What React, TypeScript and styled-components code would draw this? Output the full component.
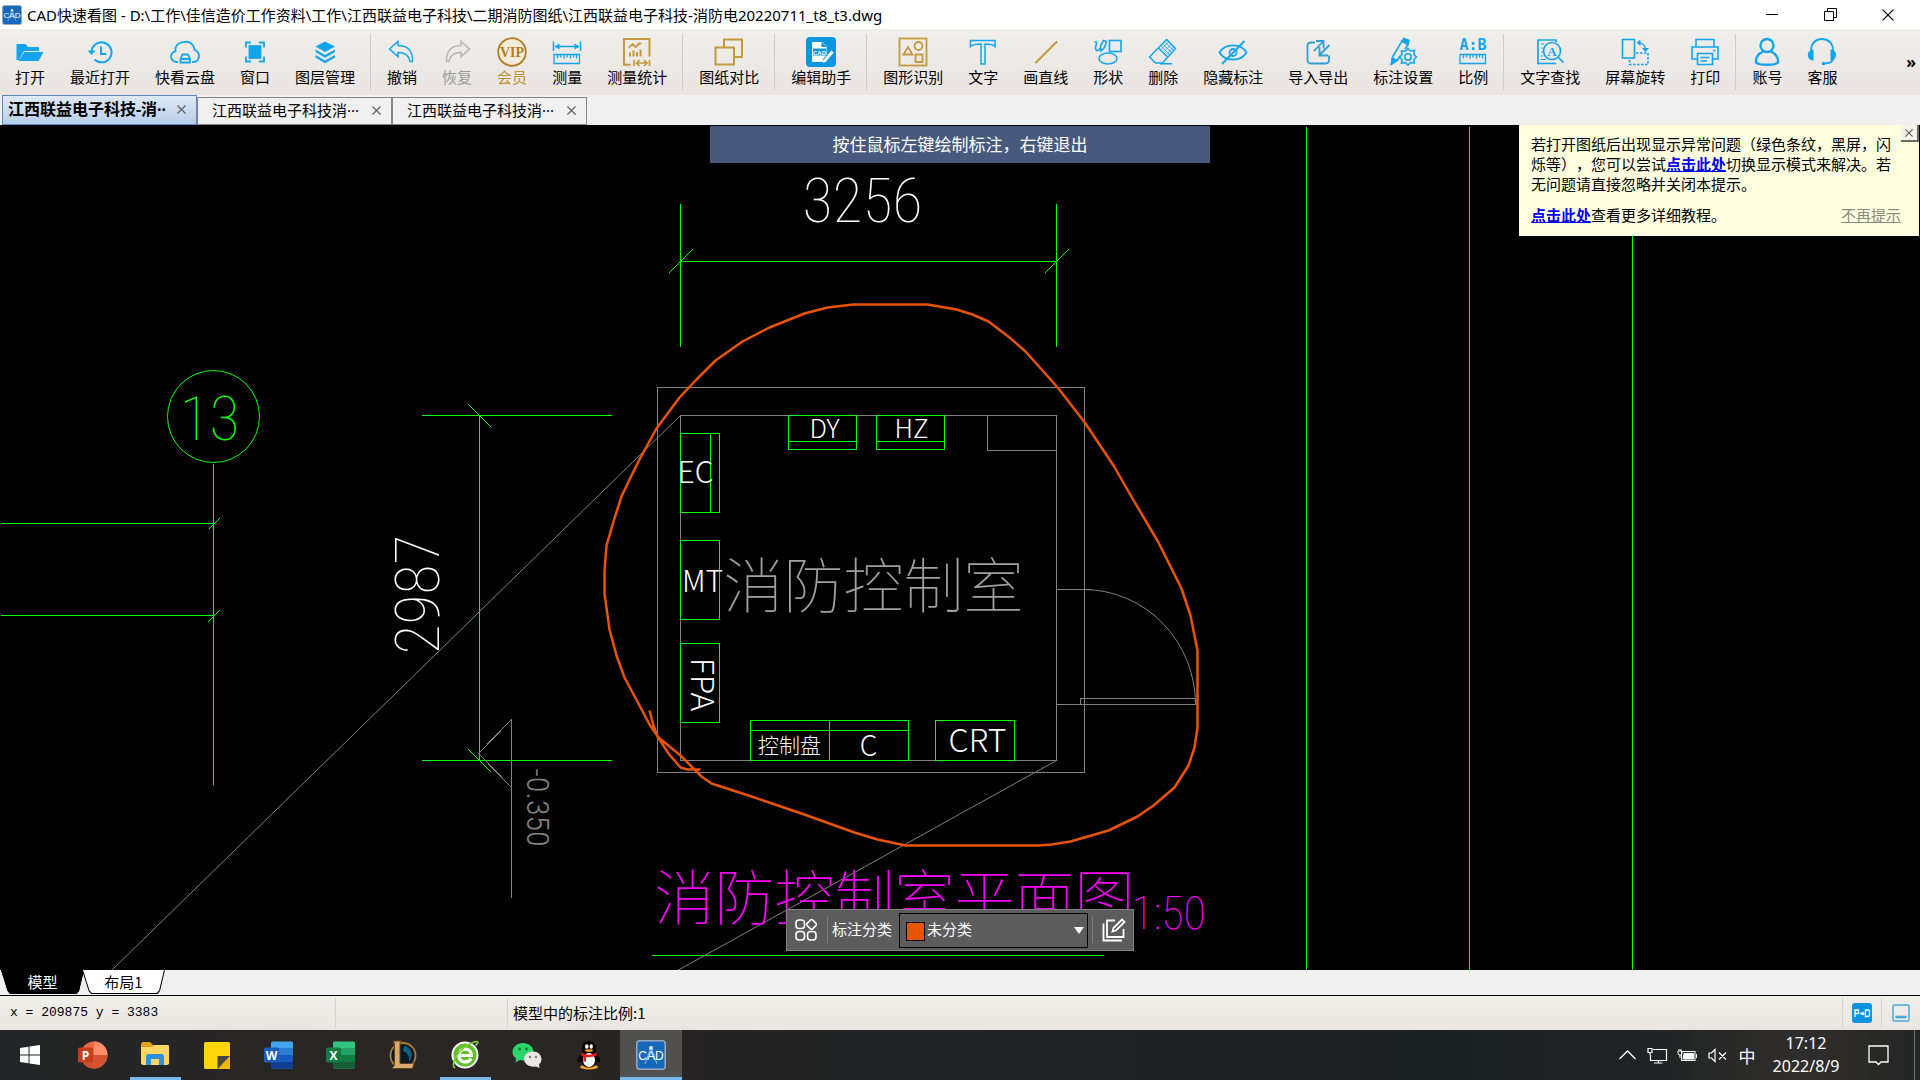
import React from "react";
import styled, { createGlobalStyle, css } from "styled-components";

const UI = `"Noto Sans", "Noto Sans CJK SC", sans-serif`;
const CJK = `"Noto Sans CJK SC", sans-serif`;
const BLUE = "#12a5ee";
const GOLD = "#c39a3c";

const GlobalStyle = createGlobalStyle`
  * { box-sizing: border-box; }
  body { margin: 0; background: #000; font-family: ${CJK}; font-size: 15px; }
  button, select { font: inherit; color: inherit; border: 0; padding: 0; margin: 0; background: none; cursor: pointer; }
`;

const Window = styled.div`
  display: flex;
  flex-direction: column;
  min-height: 100vh;
  overflow: hidden;
`;

/* ---------- title bar ---------- */
const TitleBar = styled.header`
  display: flex;
  align-items: center;
  height: 29px;
  padding: 0 3px 0 2px;
  gap: 5px;
  background: #fff;
`;
const Title = styled.h1`
  flex: 1;
  margin: 0;
  font: 400 15px/28px ${UI};
  color: #000;
  white-space: nowrap;
`;
const WindowButtons = styled.div`
  display: flex;
`;
const WindowButton = styled.button`
  width: 58px;
  height: 28px;
  display: grid;
  place-items: center;
`;

/* ---------- toolbar ---------- */
const Toolbar = styled.nav`
  display: flex;
  height: 66px;
  padding: 0 2px;
  background: linear-gradient(#efefeb, #eae4e1);
`;
const Tool = styled.button<{ $color?: string }>`
  display: flex;
  flex-direction: column;
  align-items: center;
  padding: 8px 12px 0 13px;
  color: ${(p) => p.$color ?? "#000"};
  font-size: 15px;
  line-height: 20px;
  white-space: nowrap;
  svg { display: block; overflow: visible; }
`;
const Divider = styled.i`
  width: 1px;
  height: 56px;
  margin: 5px 3px;
  background: #cfcdcb;
`;
const More = styled.button`
  margin-left: auto;
  padding: 0 2px;
  font: 700 16px/64px ${UI};
`;

/* ---------- document tabs ---------- */
const DocTabs = styled.div`
  display: flex;
  align-items: flex-end;
  height: 30px;
  padding: 0 2px;
  background: #f0f0f0;
`;
const DocTab = styled.div<{ $active?: boolean }>`
  display: flex;
  align-items: center;
  justify-content: space-between;
  width: 195px;
  height: ${(p) => (p.$active ? 30 : 28)}px;
  padding: 0 9px 2px ${(p) => (p.$active ? 5 : 14)}px;
  border: 1px solid ${(p) => (p.$active ? "#5d89bf" : "#868686")};
  background: ${(p) => (p.$active ? "linear-gradient(#dfe9f5, #b9cfe8)" : "#f0f0f0")};
  font-family: ${UI};
  font-size: ${(p) => (p.$active ? 16 : 15)}px;
  font-weight: ${(p) => (p.$active ? 700 : 400)};
  line-height: 22px;
  white-space: nowrap;
`;
const TabClose = styled.button`
  display: grid;
  place-items: center;
  width: 11px;
  height: 20px;
`;

/* ---------- drawing area ---------- */
const Canvas = styled.main`
  position: relative;
  flex: 1;
  min-height: 600px;
  background: #000;
  overflow: hidden;
`;
const Drawing = styled.svg`
  position: absolute;
  inset: 0;
  width: 100%;
  height: 100%;
  fill: none;
  text { stroke: none; font-family: ${CJK}; }
  .narrow text, text.narrow { font-family: "Roboto Condensed", ${CJK}; }
`;
const Hint = styled.p`
  position: absolute;
  top: 1px;
  left: 50%;
  width: 500px;
  height: 37px;
  margin: 0 0 0 -250px;
  background: #475a7d;
  color: #fff;
  font-size: 17px;
  line-height: 35px;
  text-align: center;
`;
const Notice = styled.aside`
  position: absolute;
  top: 0;
  right: 1px;
  width: 400px;
  padding: 9px 18px 11px 12px;
  background: #ffffdf;
  color: #000;
  line-height: 20px;
  text-spacing-trim: space-all;
  p { width: 364px; margin: 0 0 11px; line-break: anywhere; }
  a { color: #0000f0; font-weight: 700; }
`;
const NoticeFoot = styled.div`
  display: flex;
  justify-content: space-between;
  a.mute { color: #8b8b80; font-weight: 400; }
`;
const NoticeClose = styled.button`
  position: absolute;
  top: 0;
  right: 0;
  width: 18px;
  height: 17px;
  display: grid;
  place-items: center;
  background: #f3f3ea;
  border-right: 2px solid #6d6d62;
  border-bottom: 2px solid #6d6d62;
`;
const MarkBar = styled.div`
  position: absolute;
  bottom: 19px;
  left: 50%;
  display: flex;
  align-items: center;
  width: 348px;
  height: 42px;
  margin-left: -174px;
  padding: 0 2px;
  gap: 4px;
  background: #5c5c5c;
  border: 1px solid #808080;
  color: #fff;
  line-height: 20px;
  svg { display: block; }
  label { padding-bottom: 3px; }
`;
const MarkDivider = styled.i`
  width: 1px;
  height: 26px;
  background: #7d7d7d;
`;
const MarkButton = styled.button`
  display: grid;
  place-items: center;
  width: 34px;
  height: 28px;
`;
const SelectBox = styled.div`
  position: relative;
  flex: 1;
  margin-left: 3px;
  select {
    display: block;
    width: 100%;
    height: 35px;
    padding: 0 0 3px 27px;
    border: 1px solid #000;
    appearance: none;
    color: #fff;
    background: #5c5c5c;
  }
  &::before {
    content: "";
    position: absolute;
    left: 7px;
    top: 9px;
    width: 17px;
    height: 17px;
    border: 1px solid #000;
    background: #e85400;
  }
  &::after {
    content: "";
    position: absolute;
    right: 4px;
    top: 14px;
    border: 5px solid transparent;
    border-top: 7px solid #fff;
    border-bottom: 0;
  }
`;

/* ---------- layout tabs + status ---------- */
const LayoutTabs = styled.div`
  display: flex;
  height: 26px;
  padding-left: 1px;
  background: #f0f0f0;
  border-bottom: 1px solid #000;
`;
const LayoutTab = styled.button<{ $active?: boolean }>`
  position: relative;
  width: 83px;
  height: 24px;
  line-height: 24px;
  margin-right: -2px;
  isolation: isolate;
  color: ${(p) => (p.$active ? "#fff" : "#000")};
  &::before, &::after {
    content: "";
    position: absolute;
    inset: 0;
    z-index: -2;
    background: #000;
    clip-path: polygon(0 0, 100% 0, 94% 88%, 91% 100%, 11% 100%, 8% 88%);
  }
  ${(p) => !p.$active && css`
    &::after { inset: 0 1px 1px; z-index: -1; background: #fff; }
  `}
`;
const StatusBar = styled.footer`
  display: flex;
  align-items: center;
  height: 34px;
  background: linear-gradient(#efefea, #eae5e1);
  color: #000;
  white-space: nowrap;
`;
const StatusCell = styled.span<{ $width?: number; $mono?: boolean }>`
  width: ${(p) => (p.$width ? `${p.$width}px` : "auto")};
  flex: ${(p) => (p.$width ? "none" : 1)};
  padding-left: ${(p) => (p.$mono ? 10 : 5)}px;
  line-height: 30px;
  ${(p) => p.$mono && css`font: 13px/34px "Liberation Mono", monospace;`}
`;
const StatusRule = styled.i`
  width: 1px;
  height: 30px;
  background: #d3d3d1;
`;
const StatusButton = styled.button`
  width: 38px;
  height: 30px;
  display: grid;
  place-items: center;
`;

/* ---------- taskbar ---------- */
const Taskbar = styled.nav`
  display: flex;
  height: 50px;
  background: linear-gradient(90deg, #242526, #2a2624 25%, #222324 45%, #1b2022 75%, #1f2323 85%, #302e2c 94%, #232524);
  color: #fff;
`;
const TaskButton = styled.button<{ $state?: "open" | "active" }>`
  display: grid;
  place-items: center;
  width: 62px;
  height: 50px;
  &:first-child { width: 60px; margin-right: 2px; }
  ${(p) => p.$state === "open" && css`
    background: linear-gradient(#76b9ed, #76b9ed) center bottom / 51px 3px no-repeat;
  `}
  ${(p) => p.$state === "active" && css`
    background: #50514f;
    box-shadow: inset 0 -3px #76b9ed;
  `}
`;
const Tray = styled.div`
  display: flex;
  align-items: center;
  margin-left: auto;
  padding-right: 5px;
`;
const TrayButton = styled.button<{ $width: number }>`
  width: ${(p) => p.$width}px;
  height: 50px;
  display: grid;
  place-items: center;
  font-size: 17px;
`;
const Clock = styled.time`
  width: 88px;
  font: 400 16px/23px ${UI};
  text-align: center;
`;
const ShowDesktop = styled.i`
  height: 50px;
  width: 1px;
  margin-left: 7px;
  background: #757574;
`;

/* ---------- icons ---------- */
type IconProps = { color?: string; width?: number; children: React.ReactNode };
const Icon = ({ color = BLUE, width = 2, children }: IconProps) => (
  <svg width="30" height="30" viewBox="0 0 30 30" fill="none" stroke={color} strokeWidth={width} aria-hidden="true">
    {children}
  </svg>
);

const Ruler = ({ y }: { y: number }) => (
  <g strokeWidth="1.300">
    <path d={`M2 ${y}H27.500V${y + 9}H2Z`} />
    <path d={`M5.500 ${y}v4M8.500 ${y}v3M12 ${y}v4M15 ${y}v3M18.500 ${y}v4M21.500 ${y}v3M24.500 ${y}v4`} />
  </g>
);

const icons: Record<string, React.ReactNode> = {
  open: (
    <Icon width={0}>
      <path fill={BLUE} d="M1.500 23V7h9l2.500 3h11v4H9L4 23ZM9.500 15H28.500L23.500 24H3.500Z" />
    </Icon>
  ),
  recent: (
    <Icon>
      <path d="M6.500 15A10 10 0 1 1 9.500 22.500" />
      <path d="M16 9.500V17H21.500" />
      <path d="M2.500 13.500H10.500L6.500 18Z" fill={BLUE} stroke="none" />
    </Icon>
  ),
  cloud: (
    <Icon width={1.800}>
      <path d="M8 25H6.500C3 25 1 22 1 19.500 1 16.500 3.500 14.500 5.500 14.300 4.500 8.500 9.500 4.800 14 5.200 19 3.500 24 7 24.500 13 27.500 14 29 16 29 19 29 22.500 26.500 25 23.500 25H22" />
      <path d="M12.500 17.500H18L20 22V25.500H10.500V22ZM10.500 22H20" />
    </Icon>
  ),
  window: (
    <Icon width={1.800}>
      <path d="M6 10.500V5.500H11M19 5.500H24V10.500M24 19.500V24.500H19M11 24.500H6V19.500" />
      <rect x="9.500" y="9" width="11" height="12" fill={BLUE} />
    </Icon>
  ),
  layers: (
    <Icon width={0}>
      <path fill={BLUE} d="M15 4.500L25 9.500 15 15 5.500 9.500ZM5.500 12.500L15 18 25 12.500V15L15 20.800 5.500 15ZM5.500 18L15 23.500 25 18V20.500L15 26.300 5.500 20.500Z" />
    </Icon>
  ),
  undo: (
    <Icon width={1.500}>
      <path d="M2.500 12L11 4.500V8.500C20 8.500 26 13 25.500 24.500H23C22 18 18 15.500 11 15.500V19.500Z" />
    </Icon>
  ),
  redo: (
    <Icon width={1.500} color="#b5b5b5">
      <path d="M27.500 12L19 4.500V8.500C10 8.500 4 13 4.500 24.500H7C8 18 12 15.500 19 15.500V19.500Z" />
    </Icon>
  ),
  vip: (
    <Icon color="#b37d20" width={1.800}>
      <circle cx="15" cy="15" r="13.800" fill="#f4ecd9" />
      <text x="15" y="19.500" textAnchor="middle" fontFamily="Liberation Serif, serif" fontWeight="700" fontSize="14" fill="#b07c1c" stroke="none">VIP</text>
    </Icon>
  ),
  measure: (
    <Icon width={1.500}>
      <path d="M1.500 4.500V14M28.500 4.500V14M3.500 9.500H26.500" />
      <path d="M2.500 9.500L7.500 6.500V12.500ZM27.500 9.500L22.500 6.500V12.500Z" fill={BLUE} stroke="none" />
      <Ruler y={17.500} />
    </Icon>
  ),
  stats: (
    <Icon color={GOLD} width={2}>
      <path d="M8.500 27.800H2V2H27.500V19.500" />
      <path strokeWidth="1.700" d="M6.500 11L10.500 7 13.500 10 18.500 6M15.500 6.500H19.500" />
      <path d="M8 15.500V19.500M11.500 13.500V19.500M15 15V19.500M18.500 12.500V19.500" />
      <path strokeWidth="1.700" d="M12 23V29M27.500 23V29M14 26H25.500M17.500 23L14.500 26 17.500 29M22 23L25 26 22 29" />
    </Icon>
  ),
  compare: (
    <Icon color={GOLD} width={2}>
      <path d="M10 10V2.500H28V20H20.500" />
      <rect x="1.500" y="10.500" width="18.500" height="17" />
    </Icon>
  ),
  helper: (
    <Icon width={0}>
      <rect width="30" height="30" rx="4" fill="#0b96e2" />
      <path fill="#fff" d="M6 5H16L20.500 9.500V25H6Z" />
      <path fill="#0b96e2" d="M15.500 5V10H20.500Z" />
      <rect x="7" y="11.500" width="13" height="7" fill="#0b96e2" />
      <text x="13.500" y="17.500" textAnchor="middle" fontFamily="Liberation Sans, sans-serif" fontWeight="700" fontSize="6" fill="#fff" stroke="none">CAD</text>
      <path stroke="#0b96e2" strokeWidth="5" d="M26.500 14.500L18.500 24" />
      <path stroke="#fff" strokeWidth="3" d="M26.500 14.500L19 23.500" />
      <path d="M17 26l.5-3.500 3 2Z" fill="#fff" />
    </Icon>
  ),
  shapesFind: (
    <Icon color={GOLD} width={1.800}>
      <rect x="1.500" y="1.500" width="27" height="27" />
      <circle cx="20.500" cy="9" r="4" />
      <path d="M10 10L14.500 17.500H5.500ZM17.500 17.500H24.500V25H17.500Z" />
    </Icon>
  ),
  text: (
    <Icon width={1.500}>
      <path d="M2.500 3.500H27V9.500C25 7 20 7 17 7V27H13V7C10 7 5 7 2.500 9.500Z" />
    </Icon>
  ),
  line: (
    <Icon color={GOLD} width={2.200}>
      <path d="M4.500 26L26 4.500" />
    </Icon>
  ),
  shapes: (
    <Icon width={1.600}>
      <rect x="16.500" y="3.500" width="11.500" height="11" />
      <ellipse cx="15" cy="21.500" rx="9" ry="5.500" />
      <path d="M1.500 5C5 4 3 8 2.500 10.500 2.500 14 5 15 7 11.500M8 14L7.500 9 10.500 3.500 13.500 4.500 11.500 10.500Z" />
    </Icon>
  ),
  erase: (
    <Icon width={1.500}>
      <path d="M18.500 2.500L27.500 11.500 14.500 26H7.500L1.500 20Z" />
      <path d="M10.500 11L19.500 20M12 26.800H24" />
      <path strokeWidth="0.800" d="M13 9L22 18M15 7L24 16M17 5L26 14M13 12.500L21 4.500M15.500 15L24 7M18 17.500L26 9.500" />
    </Icon>
  ),
  hide: (
    <Icon width={1.800}>
      <path d="M1.500 15.500C7 6 23 6 28.500 15.500 23 25 7 25 1.500 15.500Z" />
      <circle cx="15" cy="15.500" r="3.500" />
      <path d="M26.500 4L4 27" />
    </Icon>
  ),
  transfer: (
    <Icon width={1.800} color="#2f9fd6">
      <path d="M12 5.500H8Q4.500 5.500 4.500 9V23Q4.500 26.500 8 26.500H22.500Q26 26.500 26 23V18.500" />
      <path d="M11 14L20 4.500M13 4H20.500V11.500M26.500 8L17 17.500M16.500 10V18.500H25" />
    </Icon>
  ),
  markSet: (
    <Icon width={1.600}>
      <path d="M4.500 20L14 4 20 7.500 17 12M4.500 20L3.500 27 9.500 23L12 19" />
      <path d="M14 4L16 1.500 21 3.500 20 7.500ZM4.500 21L3.500 27 9 23.500Z" fill={BLUE} />
      <path d="M20 11.500L22.500 14 26.500 13.500 26 17.500 28.500 20 26 22.500 26 26 22.500 25.500 20 28 17.500 25.500 13.500 26 14 22.500 11.500 20 14 17.500 13.500 14 17.500 14Z" />
      <circle cx="20" cy="20" r="3.200" />
    </Icon>
  ),
  ratio: (
    <Icon>
      <text x="15" y="13" textAnchor="middle" fontFamily="DejaVu Sans Mono, monospace" fontWeight="700" fontSize="15" fill={BLUE} stroke="none">A:B</text>
      <Ruler y={17.500} />
    </Icon>
  ),
  find: (
    <Icon width={1.700}>
      <path d="M21 26.500H3V3H21V5" />
      <path strokeWidth="1.200" d="M6 7H9M6 11H7.500M6 15H7.500M6 19H8M6 22.500H11" />
      <circle cx="17" cy="14" r="8.500" />
      <path d="M23 20L28.500 25.500" />
      <text x="17" y="18.500" textAnchor="middle" fontFamily="Liberation Serif, serif" fontWeight="700" fontSize="13" fill={BLUE} stroke="none">A</text>
    </Icon>
  ),
  rotate: (
    <Icon width={1.600}>
      <rect x="2.500" y="2.500" width="12" height="18.500" />
      <path strokeDasharray="2.500 1.500" d="M16 16H28V27.500H9.500V22" />
      <path d="M19 6C22 6 25 8 25.500 12" />
      <path d="M20.500 2.500V9L16.500 5.500ZM22 11H29L25.500 15Z" fill={BLUE} stroke="none" />
    </Icon>
  ),
  print: (
    <Icon width={1.600}>
      <path d="M6 9.500V2.500H24V9.500M7 22H2V10H28V22H23" />
      <path d="M7.500 16.500H22.500V27.500H7.500ZM10.500 20.500H19.500M10.500 24H17M23 13.500H25.500" />
    </Icon>
  ),
  account: (
    <Icon width={2.400}>
      <circle cx="15" cy="8.500" r="6.500" />
      <path d="M11 14.500C6 17 3.500 21 4 25.500C7 28.500 23 28.500 26 25.500 26.500 21 24 17 19 14.500" />
    </Icon>
  ),
  service: (
    <Icon width={1.800}>
      <path d="M4 14C3 -2 27 -2 26 14M26 22C25 25.500 21 26.500 18 26.500" />
      <path d="M6.500 12.500V23.500C-1 23.500 -1 12.500 6.500 12.500ZM23.500 12.500V23.500C31 23.500 31 12.500 23.500 12.500Z" fill={BLUE} stroke="none" />
      <circle cx="16.500" cy="26.500" r="1.800" fill={BLUE} stroke="none" />
    </Icon>
  ),
};

const toolGroups: [string, string, string?][][] = [
  [["open", "打开"], ["recent", "最近打开"], ["cloud", "快看云盘"], ["window", "窗口"], ["layers", "图层管理"]],
  [["undo", "撤销"], ["redo", "恢复", "#9b9b9b"], ["vip", "会员", "#c0912f"], ["measure", "测量"], ["stats", "测量统计"]],
  [["compare", "图纸对比"]],
  [["helper", "编辑助手"]],
  [["shapesFind", "图形识别"], ["text", "文字"], ["line", "画直线"], ["shapes", "形状"], ["erase", "删除"], ["hide", "隐藏标注"], ["transfer", "导入导出"], ["markSet", "标注设置"], ["ratio", "比例"]],
  [["find", "文字查找"], ["rotate", "屏幕旋转"], ["print", "打印"]],
  [["account", "账号"], ["service", "客服"]],
];

const Cross = ({ size, color, width = 1.500 }: { size: number; color: string; width?: number }) => (
  <svg width={size} height={size} viewBox="0 0 10 10" aria-hidden="true">
    <path d="M0.500 0.500L9.500 9.500M9.500 0.500L0.500 9.500" stroke={color} strokeWidth={width} />
  </svg>
);

const CadLogo = ({ size }: { size: number }) => (
  <svg width={size} height={size} viewBox="0 0 30 30" aria-hidden="true">
    <rect x="0.750" y="0.750" width="28.500" height="28.500" rx="3" fill="#1668bd" stroke="#9aa9b8" strokeWidth="1.500" />
    <path d="M15 7L9 24M15 7L21 24" stroke="#7db9ef" strokeWidth="1" />
    <circle cx="15" cy="8" r="2" fill="#d8ecff" />
    <text x="15" y="20" textAnchor="middle" fontFamily="Liberation Sans, sans-serif" fontSize="12" fill="#fff">CAD</text>
  </svg>
);

const Office = ({ letter, colors, round }: { letter: string; colors: string[]; round?: boolean }) => (
  <svg width="30" height="30" viewBox="0 0 30 30" aria-hidden="true">
    {round ? (
      <>
        <circle cx="16" cy="15" r="13.500" fill={colors[0]} />
        <path d="M16 1.500A13.500 13.500 0 0 1 29.500 15H16Z" fill={colors[1]} />
        <path d="M2.500 15H29.500A13.500 13.500 0 0 1 2.500 15Z" fill={colors[2]} />
      </>
    ) : (
      <>
        <rect x="7" y="1.500" width="22" height="27" rx="1.500" fill={colors[0]} />
        <path d="M7 8H29V15H7Z" fill={colors[1]} />
        <path d="M7 15H29V22H7Z" fill={colors[2]} />
        <path d="M7 22H29V28.500H7Z" fill={colors[4]} />
      </>
    )}
    <rect x="0" y="7.500" width="15" height="15" rx="1.500" fill={colors[3]} />
    <text x="7.500" y="19.500" textAnchor="middle" fontFamily="Open Sans, sans-serif" fontWeight="700" fontSize="12" fill="#fff">{letter}</text>
  </svg>
);

/* ---------- CAD plan ---------- */
const sketch =
  "M649 710L653 725 657 736 668 753 680 767 687 769 700 769" +
  "M695 770L680 755 658 737 649 724 639 705 624 677 616 655 609 629 604 593 604 571 606 545 613 521 621 496 630 477 639 459 656 428 679 397 696 379 715 360 742 341 769 327 804 313 827 307 853 304 927 304 956 309 972 314 988 321 1009 337 1025 351 1042 370 1058 388 1085 423 1113 465 1132 498 1158 542 1181 588 1190 615 1197 650 1197 727 1194 747 1188 765 1174 787 1153 805 1137 816 1108 830 1070 841 1051 844 1038 845 905 845 877 839 854 832 801 813 745 794 711 783 701 776 695 770";

const Plan = () => (
  <Drawing viewBox="-0.5 124.5 1920 845" preserveAspectRatio="xMidYMid slice" role="img" aria-label="消防控制室平面图">
    <g stroke="#00ff00" shapeRendering="crispEdges">
      <path d="M1306 126V970M1469 126V970M1632 126V970" />
      <path d="M213 463V784M0 523H213M0 615H213M208 529L219 518M207 622L219 610" />
      <path d="M479 415V760M421 415H611M421 760H611M468 404L491 427M468 749L491 772" />
      <path d="M680 203V346M1056 203V346M680 261H1056M668 273L692 249M1044 273L1068 249M651 955H1103" />
    </g>
    <circle cx="213" cy="416" r="46" stroke="#00ff00" />
    <g stroke="#808080" shapeRendering="crispEdges">
      <path d="M657 387H1084V772H657ZM680 415H1056V760H680ZM987 415V450H1056" />
      <path d="M1056 589H1090M1056 704H1195V698H1080V704" />
      <path d="M511 719V897M511 719L478 753 511 787" />
    </g>
    <path d="M1084 589A112 115 0 0 1 1195 704M680 415L111 970M1056 760L677 970" stroke="#808080" />
    <g stroke="#00ff00" shapeRendering="crispEdges">
      <path d="M788 415H856V449H788ZM788 441H856M876 415H944V449H876ZM876 441H944" />
      <path d="M680 433H719V512H680ZM710 433V512M680 540H719V619H680ZM680 643H719V722H680Z" />
      <path d="M750 720H908V760H750ZM750 730H908M829 720V760M935 720H1014V760H935Z" />
    </g>
    <g fill="#fff" fontWeight="300" fontSize="26">
      <text x="824" y="437" textAnchor="middle">DY</text>
      <text x="911" y="437" textAnchor="middle">HZ</text>
      <text x="695" y="482" textAnchor="middle" fontSize="30">EC</text>
      <text x="702" y="591" textAnchor="middle" fontSize="30">MT</text>
      <text transform="translate(690 684) rotate(90)" textAnchor="middle" fontSize="32">FPA</text>
      <text x="789" y="752" textAnchor="middle" fontSize="21">控制盘</text>
      <text x="868" y="755" textAnchor="middle" fontSize="28">C</text>
      <text x="977" y="751" textAnchor="middle" fontSize="32">CRT</text>
    </g>
    <g className="narrow" fill="#fff" fontSize="62" fontWeight="100">
      <text x="862" y="221" textAnchor="middle">3256</text>
      <text transform="translate(438 594) rotate(-90)" textAnchor="middle">2987</text>
    </g>
    <text className="narrow" x="209" y="439" textAnchor="middle" fill="#00ff00" fontSize="62" fontWeight="100">13</text>
    <text className="narrow" transform="translate(526 807) rotate(90)" textAnchor="middle" fill="#858585" fontSize="32" fontWeight="300">-0.350</text>
    <text x="723" y="607" fill="#a0a0a0" fontSize="60" fontWeight="100">消防控制室</text>
    <g fill="#ff00ff" fontWeight="100">
      <text x="654" y="919" fontSize="60">消防控制室平面图</text>
      <text className="narrow" x="1168" y="928" fontSize="46" textAnchor="middle">1:50</text>
    </g>
    <path d={sketch} stroke="#e85400" strokeWidth="2.500" strokeLinejoin="round" />
  </Drawing>
);

const docTabs = ["江西联益电子科技-消··", "江西联益电子科技消···", "江西联益电子科技消···"];

export default function App() {
  return (
    <Window>
      <GlobalStyle />
      <TitleBar>
        <CadLogo size={20} />
        <Title>CAD快速看图 - D:\工作\佳信造价工作资料\工作\江西联益电子科技\二期消防图纸\江西联益电子科技-消防电20220711_t8_t3.dwg</Title>
        <WindowButtons>
          <WindowButton aria-label="最小化">
            <svg width="12" height="12"><path d="M0 5.500H12" stroke="#000" /></svg>
          </WindowButton>
          <WindowButton aria-label="还原">
            <svg width="13" height="13" fill="none" stroke="#000"><path d="M0.500 3.500H9.500V12.500H0.500ZM3.500 3V0.500H12.500V9.500H10" /></svg>
          </WindowButton>
          <WindowButton aria-label="关闭">
            <Cross size={12} color="#000" width={1} />
          </WindowButton>
        </WindowButtons>
      </TitleBar>

      <Toolbar>
        {toolGroups.map((group, i) => (
          <React.Fragment key={i}>
            {i > 0 && <Divider />}
            {group.map(([icon, label, color]) => (
              <Tool key={icon} $color={color}>
                {icons[icon]}
                {label}
              </Tool>
            ))}
          </React.Fragment>
        ))}
        <More aria-label="更多">»</More>
      </Toolbar>

      <DocTabs>
        {docTabs.map((name, i) => (
          <DocTab key={i} $active={i === 0}>
            <button>{name}</button>
            <TabClose aria-label="关闭标签">
              <Cross size={9} color="#666" />
            </TabClose>
          </DocTab>
        ))}
      </DocTabs>

      <Canvas>
        <Plan />
        <Hint>按住鼠标左键绘制标注，右键退出</Hint>
        <Notice>
          <p>
            若打开图纸后出现显示异常问题（绿色条纹，黑屏，闪烁等），您可以尝试<a href="#mode">点击此处</a>切换显示模式来解决。若无问题请直接忽略并关闭本提示。
          </p>
          <NoticeFoot>
            <span><a href="#guide">点击此处</a>查看更多详细教程。</span>
            <a className="mute" href="#mute">不再提示</a>
          </NoticeFoot>
          <NoticeClose aria-label="关闭提示">
            <Cross size={8} color="#555" width={1.300} />
          </NoticeClose>
        </Notice>
        <MarkBar>
          <MarkButton aria-label="标注分类管理">
            <svg width="22" height="22" viewBox="0 0 22 22" fill="none" stroke="#fff" strokeWidth="1.600">
              <rect x="1" y="1" width="8.500" height="8.500" rx="3" />
              <rect x="1" y="12.500" width="8.500" height="8.500" rx="3" />
              <rect x="12.500" y="12.500" width="8.500" height="8.500" rx="3" />
              <rect x="12.700" y="1.500" width="7.800" height="7.800" rx="1.500" transform="rotate(45 16.600 5.400)" />
            </svg>
          </MarkButton>
          <MarkDivider />
          <label htmlFor="category">标注分类</label>
          <SelectBox>
            <select id="category" defaultValue="none">
              <option value="none">未分类</option>
            </select>
          </SelectBox>
          <MarkDivider />
          <MarkButton aria-label="编辑分类">
            <svg width="24" height="24" viewBox="0 0 24 24" fill="none" stroke="#fff" strokeWidth="1.800">
              <path d="M13 2.500H5V19H21.500V11" />
              <path d="M1.500 5.500V22.500H20" />
              <path d="M20 1.500L22.500 4 14 12.500 10.500 13.500 11.500 10Z" />
            </svg>
          </MarkButton>
        </MarkBar>
      </Canvas>

      <LayoutTabs>
        <LayoutTab $active>模型</LayoutTab>
        <LayoutTab>布局1</LayoutTab>
      </LayoutTabs>

      <StatusBar>
        <StatusCell $width={335} $mono>x = 209875 y = 3383</StatusCell>
        <StatusRule />
        <StatusCell $width={171} />
        <StatusRule />
        <StatusCell>模型中的标注比例:1</StatusCell>
        <StatusRule />
        <StatusButton aria-label="坐标模式">
          <svg width="20" height="20">
            <rect width="20" height="20" rx="3" fill="#0b93dd" />
            <path d="M3 14V7H6.500V10.500H3M8 10.500H12M10.500 9L12 10.500 10.500 12M13.500 7H16.500L17.500 8V12.500L16.500 13.500H13.500Z" fill="none" stroke="#fff" strokeWidth="1.300" />
          </svg>
        </StatusButton>
        <StatusRule />
        <StatusButton aria-label="命令栏">
          <svg width="18" height="18" fill="none" stroke="#4aa8d8">
            <rect x="1" y="1" width="16" height="16" rx="1.500" strokeWidth="1.500" />
            <path d="M3.500 13H14.500" strokeWidth="2.500" />
          </svg>
        </StatusButton>
      </StatusBar>

      <Taskbar>
        <TaskButton aria-label="开始">
          <svg width="20" height="20" fill="#fff">
            <path d="M0 3L8.500 1.800V9.500H0ZM9.500 1.600L20 0V9.500H9.500ZM0 10.500H8.500V18.200L0 17ZM9.500 10.500H20V20L9.500 18.400Z" />
          </svg>
        </TaskButton>
        <TaskButton aria-label="PowerPoint">
          <Office letter="P" round colors={["#ed6c47", "#ff8f6b", "#d35230", "#c43e1c"]} />
        </TaskButton>
        <TaskButton aria-label="文件资源管理器" $state="open">
          <svg width="28" height="26">
            <path d="M0 2.500C0 1 1 0 2 0H9L12 3H26C27 3 28 4 28 5V8H0Z" fill="#e2a11b" />
            <path d="M0 5H11L14 3H27C28 3 28 4 28 5V21C28 22 27 23 26 23H2C1 23 0 22 0 21Z" fill="#fdd663" />
            <path d="M5 23V14C5 13 6 12 7 12H21C22 12 23 13 23 14V23H18V17H10V23Z" fill="#2f8fe0" />
          </svg>
        </TaskButton>
        <TaskButton aria-label="便笺">
          <svg width="26" height="27">
            <path d="M1.500 0H24.500Q26 0 26 1.500V15L14 27H1.500Q0 27 0 25.500V1.500Q0 0 1.500 0Z" fill="#ffd60a" />
            <path d="M26 14V27H14L26 14Z" fill="#f5b800" />
            <path d="M13.500 14H26L13.500 27Z" fill="#4a4842" />
          </svg>
        </TaskButton>
        <TaskButton aria-label="Word">
          <Office letter="W" colors={["#41a5ee", "#2b7cd3", "#185abd", "#1a5dbe", "#103f91"]} />
        </TaskButton>
        <TaskButton aria-label="Excel">
          <Office letter="X" colors={["#33c481", "#21a366", "#107c41", "#107c41", "#185c37"]} />
        </TaskButton>
        <TaskButton aria-label="英雄联盟">
          <svg width="28" height="30">
            <circle cx="14" cy="15.500" r="12.500" fill="#071a26" stroke="#b07c3c" strokeWidth="1.800" />
            <path d="M15 6C23 7 25 16 20 22 21 16 18 12 14 11Z" fill="#14607f" />
            <path d="M4 1H12.500L11 3V23.500H23L25.500 22 23.500 28.500H2.500L5.500 25.500V4Z" fill="#d9a970" stroke="#5e421b" strokeWidth="1" />
          </svg>
        </TaskButton>
        <TaskButton aria-label="浏览器" $state="open">
          <svg width="30" height="30" fill="none">
            <circle cx="15" cy="15" r="12.500" fill="#5fbf2c" stroke="#fff" strokeWidth="2" />
            <path d="M9 15.500H21.500C21.500 7 9 7 9 15.500 9 23.500 18.500 23.500 21 18.500" stroke="#fff" strokeWidth="3.200" />
            <path d="M5 28C0 24 8 8 24 2C29 0.500 28.500 3 25.500 5.500" stroke="#7fce3a" strokeWidth="1.800" />
          </svg>
        </TaskButton>
        <TaskButton aria-label="微信">
          <svg width="30" height="27">
            <path d="M11 1C17 1 21.500 5 21.500 10S17 18.500 11 18.500L8 18 3.500 20.500 4 16C1.500 14.500 0.500 12.500 0.500 10 0.500 5 5 1 11 1Z" fill="#2bd569" />
            <circle cx="7.500" cy="7" r="1.400" fill="#13763a" />
            <circle cx="14.500" cy="7" r="1.400" fill="#13763a" />
            <path d="M21 9.500C26 9.500 29.500 13 29.500 17 29.500 19.500 28.500 21 27 22.500L27.500 26 24 24.500C17.500 25.500 12 22 12 17 12 13 16 9.500 21 9.500Z" fill="#e6e6e6" />
            <circle cx="18" cy="15" r="1.200" fill="#777" />
            <circle cx="24" cy="15" r="1.200" fill="#777" />
          </svg>
        </TaskButton>
        <TaskButton aria-label="QQ">
          <svg width="26" height="30">
            <ellipse cx="13" cy="27" rx="9" ry="2.500" fill="#f5a623" />
            <path d="M13 1C18 1 20 4 20 9V12L24 19C25 22 24 24 21 21 20 26 17 27.500 13 27.500S6 26 5 21C2 24 1 22 2 19L6 12V9C6 4 8 1 13 1Z" fill="#050505" />
            <ellipse cx="13" cy="20" rx="6" ry="7" fill="#fff" />
            <ellipse cx="10.800" cy="6.500" rx="1.700" ry="2.300" fill="#fff" />
            <ellipse cx="15.200" cy="6.500" rx="1.700" ry="2.300" fill="#fff" />
            <ellipse cx="13" cy="10.500" rx="4" ry="1.300" fill="#f5a623" />
            <path d="M5.500 12.500Q13 17 20.500 12.500L21 15.500Q15 18 10 17V21.500H7.500V16.500L5 15.500Z" fill="#e51b1b" />
          </svg>
        </TaskButton>
        <TaskButton aria-label="CAD快速看图" $state="active">
          <CadLogo size={30} />
        </TaskButton>
        <Tray>
          <TrayButton $width={30} aria-label="显示隐藏的图标">
            <svg width="17" height="10" fill="none" stroke="#fff" strokeWidth="1.300"><path d="M0.500 9L8.500 1 16.500 9" /></svg>
          </TrayButton>
          <TrayButton $width={30} aria-label="网络">
            <svg width="21" height="17" fill="none" stroke="#fff" strokeWidth="1.200">
              <path d="M6 2.500H19.500V13.500H3.500V8M1 1.500H5V5.500H1ZM3 5.500V8M11.500 13.500V16M7 16H15.500" />
            </svg>
          </TrayButton>
          <TrayButton $width={30} aria-label="电池">
            <svg width="21" height="15" fill="none" stroke="#fff">
              <rect x="4.500" y="3.500" width="13.500" height="9" />
              <path d="M7 5.500H16.500V11H6Z" fill="#fff" />
              <path d="M19.500 6V10M1 3H5V6L4 7H2L1 6ZM2 1V3M4 1V3M3 7V10" />
            </svg>
          </TrayButton>
          <TrayButton $width={30} aria-label="静音">
            <svg width="19" height="15" fill="none" stroke="#fff" strokeWidth="1.200">
              <path d="M1 5H3.500L7 1.500V13.500L3.500 10H1ZM11 4.500L18 11.500M18 4.500L11 11.500" />
            </svg>
          </TrayButton>
          <TrayButton $width={30} aria-label="输入法">中</TrayButton>
          <Clock>17:12<br />2022/8/9</Clock>
          <TrayButton $width={57} aria-label="通知">
            <svg width="21" height="21" fill="none" stroke="#fff" strokeWidth="1.300">
              <path d="M1 1H20V17H13L10.500 19.500 8 17H1Z" />
            </svg>
          </TrayButton>
          <ShowDesktop />
        </Tray>
      </Taskbar>
    </Window>
  );
}
